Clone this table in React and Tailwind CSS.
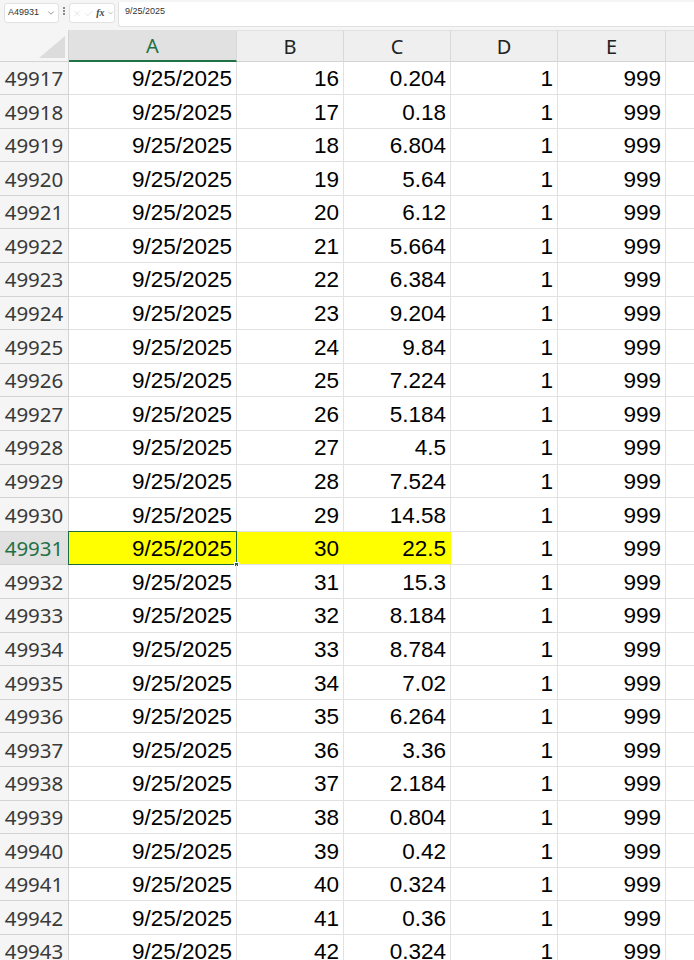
import { ChevronDown, X, Check } from 'lucide-react';

const ROWS = [
  [49917, 16, '0.204'],
  [49918, 17, '0.18'],
  [49919, 18, '6.804'],
  [49920, 19, '5.64'],
  [49921, 20, '6.12'],
  [49922, 21, '5.664'],
  [49923, 22, '6.384'],
  [49924, 23, '9.204'],
  [49925, 24, '9.84'],
  [49926, 25, '7.224'],
  [49927, 26, '5.184'],
  [49928, 27, '4.5'],
  [49929, 28, '7.524'],
  [49930, 29, '14.58'],
  [49931, 30, '22.5'],
  [49932, 31, '15.3'],
  [49933, 32, '8.184'],
  [49934, 33, '8.784'],
  [49935, 34, '7.02'],
  [49936, 35, '6.264'],
  [49937, 36, '3.36'],
  [49938, 37, '2.184'],
  [49939, 38, '0.804'],
  [49940, 39, '0.42'],
  [49941, 40, '0.324'],
  [49942, 41, '0.36'],
  [49943, 42, '0.324'],
];

const SELECTED = 49931;
const COLS = ['A', 'B', 'C', 'D', 'E'];
const WIDTHS = ['w-[168px]', 'w-[107px]', 'w-[107px]', 'w-[107px]', 'w-[108px]'];

function FormulaBar() {
  return (
    <div className="flex items-start h-[30px] bg-[#f5f5f5] font-['Liberation_Sans',sans-serif] text-[9px] text-[#333]">
      {/* name box */}
      <div className="mt-[3px] ml-[4px] w-[55px] h-[20px] bg-white border border-[#e1e1e1] rounded-[3px] flex items-center justify-between pl-[3px] pr-[2px]">
        <span>A49931</span>
        <ChevronDown size={10} strokeWidth={1.5} className="text-[#555]" />
      </div>
      <div className="mt-[7px] ml-[3px] w-[4px] flex flex-col items-center gap-[1.5px]">
        <span className="w-[1.5px] h-[1.5px] bg-[#666] rounded-full" />
        <span className="w-[1.5px] h-[1.5px] bg-[#666] rounded-full" />
        <span className="w-[1.5px] h-[1.5px] bg-[#666] rounded-full" />
      </div>
      {/* cancel / enter / fx */}
      <div className="mt-[3px] ml-[3px] w-[46px] h-[20px] bg-white border border-[#e1e1e1] rounded-[3px] flex items-center gap-[2px] pl-[2px]">
        <X size={11} strokeWidth={1} className="text-[#c4c4c4]" />
        <Check size={11} strokeWidth={1} className="text-[#c4c4c4]" />
        <span className="font-['Liberation_Serif',serif] italic font-bold text-[10px] text-[#444] leading-none">fx</span>
        <ChevronDown size={8} strokeWidth={1.5} className="text-[#777]" />
      </div>
      {/* formula input */}
      <div className="mt-[2px] ml-[3px] flex-1 h-[25px] bg-white border-l border-b border-[#e1e1e1] rounded-bl-[3px] pl-[6px] pt-[3px]">
        9/25/2025
      </div>
    </div>
  );
}

function HeaderRow() {
  return (
    <div className="flex h-[31.5px] bg-[#f5f5f5]">
      <div className="relative w-[69px] shrink-0 border-r border-b border-[#d4d4d4] bg-[#f5f5f5] overflow-hidden">
        <div className="absolute right-[3px] bottom-[3px] w-0 h-0 [border-bottom:22px_solid_#dcdcdc] [border-left:26px_solid_transparent]" />
      </div>
      {COLS.map((c, i) => (
        <div
          key={c}
          className={`${WIDTHS[i]} shrink-0 flex items-center justify-center pt-[2px] text-[20px] font-['Noto_Sans',sans-serif] border-r border-[#d9d9d9] border-t ${
            i === 0
              ? 'bg-[#e1e1e1] text-[#1e7145] border-b-2 border-b-[#217346] border-t-[#e1e1e1]'
              : 'bg-[#efefef] text-[#222] border-b border-b-[#d4d4d4] border-t-[#e1e1e1]'
          }`}
        >
          {c}
        </div>
      ))}
      <div className="flex-1 bg-[#efefef] border-t border-t-[#e1e1e1] border-b border-b-[#d4d4d4]" />
    </div>
  );
}

function DataRow({ n, b, c }) {
  const sel = n === SELECTED;
  const cell = 'shrink-0 flex items-center justify-end pr-[4px] pt-[2px] border-r border-b border-[#e1e1e1]';
  return (
    <div className="flex h-[33.6px] font-['Liberation_Sans',sans-serif] text-[22.5px] text-black">
      <div
        className={`w-[69px] shrink-0 flex items-center justify-center pt-[1px] font-['Noto_Sans',sans-serif] text-[20.5px] border-r border-b border-[#d4d4d4] ${
          sel ? 'bg-[#e1e1e1] text-[#1e7145]' : 'bg-[#f5f5f5] text-[#3a3a3a]'
        }`}
      >
        {n}
      </div>
      <div className={`${WIDTHS[0]} ${cell} relative ${sel ? 'bg-[#ffff00]' : ''}`}>
        9/25/2025
        {sel && (
          <>
            <span className="absolute -left-px -top-px -right-px -bottom-px border border-[#1e6b41]" />
            <span className="absolute -right-[3px] -bottom-[3px] w-[5px] h-[5px] bg-[#1e6b41] border border-white" />
          </>
        )}
      </div>
      <div className={`${WIDTHS[1]} ${cell} ${sel ? 'bg-[#ffff00] border-r-[#ffff00]' : ''}`}>{b}</div>
      <div className={`${WIDTHS[2]} ${cell} ${sel ? 'bg-[#ffff00] border-r-[#ffff00]' : ''}`}>{c}</div>
      <div className={`${WIDTHS[3]} ${cell}`}>1</div>
      <div className={`${WIDTHS[4]} ${cell}`}>999</div>
      <div className="flex-1 border-b border-[#e1e1e1] bg-white" />
    </div>
  );
}

export default function App() {
  return (
    <div className="w-[694px] h-[960px] overflow-hidden bg-white">
      <FormulaBar />
      <HeaderRow />
      {ROWS.map(([n, b, c]) => (
        <DataRow key={n} n={n} b={b} c={c} />
      ))}
    </div>
  );
}
